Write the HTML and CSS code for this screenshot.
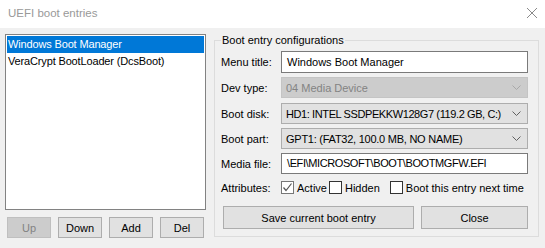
FILE: index.html
```html
<!DOCTYPE html>
<html>
<head>
<meta charset="utf-8">
<link rel="stylesheet" href="styles.css">
</head>
<body>
<div class="window">
  <div class="titlebar">
    <span class="title">UEFI boot entries</span>
    <svg class="close" width="12" height="12" viewBox="0 0 12 12"><path d="M1 1 L11 11 M11 1 L1 11" stroke="#8a8a8a" stroke-width="1" fill="none"/></svg>
  </div>
  <div class="content">
    <div class="left">
      <div class="list">
        <div class="item selected">Windows Boot Manager</div>
        <div class="item">VeraCrypt BootLoader (DcsBoot)</div>
      </div>
      <div class="list-buttons">
        <button class="btn small disabled">Up</button>
        <button class="btn small">Down</button>
        <button class="btn small">Add</button>
        <button class="btn small">Del</button>
      </div>
    </div>
    <fieldset class="group">
      <legend>Boot entry configurations</legend>
      <div class="row r-title">
        <span class="label">Menu title:</span>
        <div class="edit">Windows Boot Manager</div>
      </div>
      <div class="row r-combo">
        <span class="label">Dev type:</span>
        <div class="combo disabled"><span>04 Media Device</span><svg width="9" height="5" viewBox="0 0 9 5"><path d="M0.5 0.5 L4.5 4.5 L8.5 0.5" stroke="#a8a8a8" fill="none"/></svg></div>
      </div>
      <div class="row r-combo gap5">
        <span class="label">Boot disk:</span>
        <div class="combo"><span class="caps">HD1: INTEL SSDPEKKW128G7 (119.2 GB, C:)</span><svg width="9" height="5" viewBox="0 0 9 5"><path d="M0.5 0.5 L4.5 4.5 L8.5 0.5" stroke="#606060" fill="none"/></svg></div>
      </div>
      <div class="row r-combo">
        <span class="label">Boot part:</span>
        <div class="combo"><span class="caps-light">GPT1: (FAT32, 100.0 MB, NO NAME)</span><svg width="9" height="5" viewBox="0 0 9 5"><path d="M0.5 0.5 L4.5 4.5 L8.5 0.5" stroke="#606060" fill="none"/></svg></div>
      </div>
      <div class="row r-media">
        <span class="label">Media file:</span>
        <div class="edit"><span class="caps">\EFI\MICROSOFT\BOOT\BOOTMGFW.EFI</span></div>
      </div>
      <div class="row r-attr">
        <span class="label">Attributes:</span>
        <label class="check c-active"><span class="box checked"><svg width="11" height="11" viewBox="0 0 11 11"><path d="M1.5 5.5 L4 8.5 L9.5 1.5" stroke="#555" stroke-width="1.2" fill="none"/></svg></span>Active</label>
        <label class="check c-hidden"><span class="box"></span>Hidden</label>
        <label class="check"><span class="box"></span>Boot this entry next time</label>
      </div>
      <div class="actions">
        <button class="btn save">Save current boot entry</button>
        <button class="btn closebtn">Close</button>
      </div>
    </fieldset>
  </div>
</div>
</body>
</html>
```

FILE: styles.css
```css
* { box-sizing: border-box; }
html, body { margin: 0; padding: 0; }
body {
  width: 545px;
  height: 248px;
  background: #f0f0f0;
  font-family: "Liberation Sans", Arial, sans-serif;
  font-size: 11px;
  color: #000;
  overflow: hidden;
}
.window { width: 545px; height: 248px; }
.titlebar {
  height: 28px;
  background: #fff;
  display: flex;
  align-items: center;
  justify-content: space-between;
  padding: 0 7px 2px 8px;
}
.title { color: #999; font-size: 11.5px; }
.close { display: block; margin-top: -1px; }
.content {
  display: flex;
  align-items: flex-start;
  padding-left: 5px;
}
.left { width: 201px; margin-top: 6px; }
.list {
  height: 176px;
  background: #fff;
  border: 1px solid #828282;
  padding: 1px;
}
.item {
  height: 17px;
  line-height: 17px;
  padding-left: 1px;
  white-space: nowrap;
  letter-spacing: -0.15px;
}
.item.selected { background: #0078d7; color: #fff; }
.list-buttons {
  display: flex;
  gap: 7px;
  margin-top: 7px;
  padding-left: 2px;
}
.btn {
  font-family: inherit;
  font-size: 11px;
  color: #000;
  background: #e1e1e1;
  border: 1px solid #adadad;
  padding: 0;
  margin: 0;
}
.btn.small { width: 44px; height: 21px; }
.btn.disabled { background: #cccccc; border-color: #bfbfbf; color: #838383; }
.group {
  margin: 4px 0 0 8px;
  width: 325px;
  border: 1px solid #dcdcdc;
  padding: 3px 10px 7px 6px;
}
.group legend {
  padding: 0 1px;
  line-height: 16px;
  height: 16px;
}
.row {
  display: flex;
  align-items: center;
}
.label { width: 60px; flex: none; }
.edit {
  width: 247px;
  height: 22px;
  line-height: 20px;
  background: #fff;
  border: 1px solid #7a7a7a;
  padding-left: 5px;
  white-space: nowrap;
}
.caps { letter-spacing: -0.4px; }
.caps-light { letter-spacing: -0.25px; }
.r-combo { margin-top: 4px; }
.gap5 { margin-top: 5px; }
.combo {
  width: 247px;
  height: 21px;
  background: #e1e1e1;
  border: 1px solid #adadad;
  display: flex;
  align-items: center;
  justify-content: space-between;
  padding: 0 6px 0 4px;
  white-space: nowrap;
}
.combo svg { display: block; flex: none; }
.combo.disabled { background: #cccccc; border-color: #c4c4c4; color: #838383; }
.r-media { margin-top: 4px; }
.r-media .edit { height: 21px; line-height: 19px; }
.r-attr { margin-top: 7px; height: 13px; }
.check {
  display: flex;
  align-items: center;
  white-space: nowrap;
}
.box {
  width: 13px;
  height: 13px;
  border: 1px solid #333;
  background: #fff;
  margin-right: 3px;
  display: flex;
  align-items: center;
  justify-content: center;
  flex: none;
}
.box.checked { border-color: #777; }
.box svg { display: block; }
.c-active { margin-right: 2px; }
.c-hidden { margin-right: 10px; }
.actions {
  display: flex;
  gap: 7px;
  margin-top: 12px;
  padding-left: 2px;
}
.btn.save { width: 191px; height: 23px; }
.btn.closebtn { width: 107px; height: 23px; }
```
